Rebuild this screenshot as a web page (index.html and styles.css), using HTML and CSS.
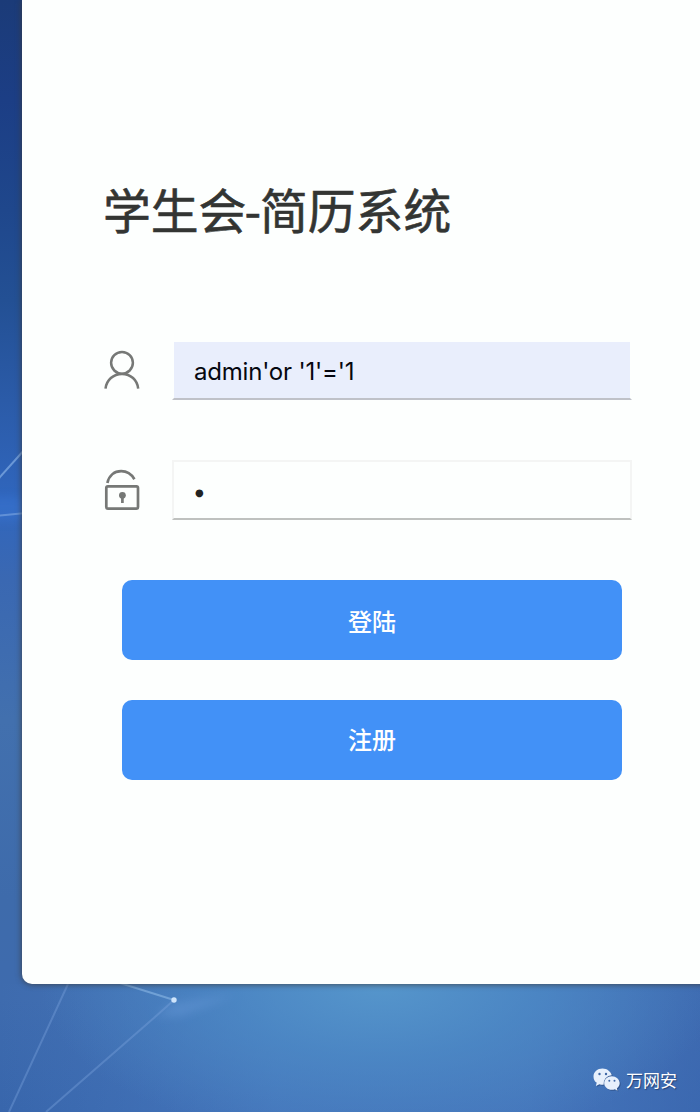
FILE: index.html
```html
<!DOCTYPE html>
<html lang="zh-CN">
<head>
    <meta charset="UTF-8">
    <meta name="viewport" content="width=device-width, initial-scale=1.0">
    <title>学生会-简历系统</title>
    <link rel="stylesheet" href="styles.css">
</head>
<body>
    <!-- background lines -->
    <svg class="bg-lines" viewBox="0 0 700 1112" fill="none">
        <defs>
            <filter id="soft" x="-50%" y="-50%" width="200%" height="200%"><feGaussianBlur stdDeviation="5"/></filter>
        </defs>
        <ellipse cx="4" cy="509" rx="34" ry="12" fill="#3a78d8" opacity=".4" filter="url(#soft)"/>
        <path d="M-10 488L26 448" stroke="#7fa9e2" stroke-width="2" opacity=".75"/>
        <path d="M-5 516L26 513" stroke="#7fa9e2" stroke-width="2" opacity=".6"/>
        <path d="M68 984L9 1112" stroke="#7ba3dc" stroke-width="2" opacity=".4"/>
        <path d="M120 983L174 1000" stroke="#8cb9e6" stroke-width="2" opacity=".6"/>
        <path d="M174 1000L155 1017L46 1112" stroke="#7ba3dc" stroke-width="2" opacity=".4"/>
        <path d="M174 1003L155 1017L182 1016L235 995Z" fill="#6fa0e0" opacity=".35" filter="url(#soft)"/>
        <circle cx="174" cy="1000" r="2.7" fill="#cfe4fb"/>
    </svg>
    <div class="login-box">
        <h1>学生会<span class="dash">-</span>简历系统</h1>
        <form id="loginForm">
            <div class="row">
                <svg class="icon" width="36" height="42" viewBox="0 0 36 42" fill="none" stroke="#767876" stroke-width="2.5">
                    <circle cx="18" cy="13.8" r="10.9"/>
                    <path d="M1.5 39.6C2.5 31 9.3 24.9 18 24.9S33.3 31 34.2 39.6"/>
                </svg>
                <input type="text" class="filled" value="admin'or '1'='1">
            </div>
            <div class="row">
                <svg class="icon" width="36" height="42" viewBox="0 0 36 42" fill="none" stroke="#767876" stroke-width="2.7">
                    <path d="M3.4 14C5 6.3 10.5 2.2 17.2 2.2C22.8 2.2 27.3 5 30.4 10.2"/>
                    <rect x="2.3" y="17.3" width="31.7" height="22.4" rx="1.6"/>
                    <circle cx="18.4" cy="26.3" r="3.4" fill="#767876" stroke="none"/>
                    <path d="M18.4 27V34"/>
                </svg>
                <input type="text" class="pwd" value="●">
            </div>
            <button type="button" class="btn">登陆</button>
            <button type="button" class="btn btn-reg">注册</button>
        </form>
    </div>
    <div class="footer">
        <svg width="27" height="24" viewBox="0 0 27 24">
            <path d="M9.5.5C4.5.5.5 3.9.5 8.5C.5 11.2 1.7 13.5 3.7 14.8L2.9 18L6.4 16.3Q8.5 17 10.6 16.8A8.3 8.3 0 0 1 18.8 7.3C17.7 3.3 14 .5 9.5.5Z" fill="#e7f0fc"/>
            <path d="M18.8 8.2C14.5 8.2 11.2 11.2 11.2 15S14.5 21.8 18.8 21.8Q20.5 21.8 21.9 21.3L24.5 22.8L23.9 20.2C25.6 19 26.7 17.2 26.7 15C26.7 11.2 23 8.2 18.8 8.2Z" fill="#e7f0fc"/>
            <g fill="#3f68a6">
                <circle cx="6.5" cy="6" r="1.2"/>
                <circle cx="13" cy="6" r="1.2"/>
                <circle cx="16.3" cy="12.8" r="1"/>
                <circle cx="21.5" cy="12.8" r="1"/>
            </g>
        </svg>
        <span>万网安</span>
    </div>
</body>
</html>
```

FILE: styles.css
```css
* {
    box-sizing: border-box;
}
body {
    margin: 0;
    height: 1112px;
    overflow: hidden;
    position: relative;
    font-family: "Noto Sans CJK SC", sans-serif;
    background:
        radial-gradient(ellipse 340px 160px at 380px 985px, rgba(88, 155, 206, 0.85) 0%, rgba(78, 142, 200, 0.65) 45%, rgba(70, 122, 190, 0) 100%),
        linear-gradient(90deg, rgba(62, 106, 174, 0), rgba(74, 124, 194, 0.7) 40%, rgba(74, 124, 194, 0.7) 75%, rgba(62, 106, 180, 0.5)) 0 984px / 100% 128px no-repeat,
        linear-gradient(180deg, #1b3b78 0, #1c3e85 100px, #1f478c 210px, #235094 300px, #2b5ba8 400px, #3066bd 500px, #3a68b2 580px, #4270ae 720px, #3e6bab 900px, #3e6bae 1000px, #3866ac 1112px);
}
.bg-lines {
    position: absolute;
    left: 0;
    top: 0;
    width: 700px;
    height: 1112px;
}
.login-box {
    position: relative;
    height: 984px;
    margin-left: 22px;
    margin-right: -20px;
    padding: 174px 88px 0 82px;
    background: #fdfffe;
    border-radius: 0 0 0 10px;
    box-shadow: 0 0 6px rgba(60, 60, 60, 0.9);
}
h1 {
    margin: 0 0 96px -1px;
    font-size: 47.8px;
    line-height: 70px;
    font-weight: 400;
    color: #333533;
    white-space: nowrap;
    -webkit-text-stroke: 0.6px #333533;
}
.dash {
    margin: 0 -1px 0 -2px;
}
.row {
    display: flex;
    align-items: center;
    gap: 32px;
    height: 60px;
    margin-bottom: 60px;
}
.icon {
    flex: none;
}
input {
    width: 460px;
    height: 60px;
    padding: 0 20px;
    border: 2px solid #f4f5f4;
    border-bottom-color: #bfc1bf;
    background: #fdfffe;
    font-family: Inter, "Noto Sans CJK SC", sans-serif;
    font-size: 24px;
    color: #222;
    outline: none;
}
input.filled {
    padding-top: 2px;
    border-color: #fdfffe;
    border-bottom-color: #bfc1c8;
    background: #e9eefc;
    background-clip: padding-box;
    color: #05070f;
    letter-spacing: -0.2px;
}
input.pwd {
    font-family: "DejaVu Sans", sans-serif;
    font-size: 10px;
    padding: 5px 21px 0;
}
.btn {
    display: block;
    width: 500px;
    height: 80px;
    margin: 0 0 40px 18px;
    padding: 0;
    border: none;
    border-radius: 10px;
    background: #4291f7;
    color: #fff;
    font-family: inherit;
    font-size: 24px;
    font-weight: 500;
    cursor: pointer;
}
.btn-reg {
    padding-bottom: 4px;
}
.footer {
    position: relative;
    display: flex;
    align-items: center;
    justify-content: flex-end;
    gap: 6px;
    height: 24px;
    margin: 84px 23px 0 0;
    color: #fff;
    font-size: 17px;
    line-height: 24px;
    text-shadow: 1px 1px 1px rgba(20, 40, 80, 0.6);
}
.footer svg {
    filter: drop-shadow(1px 1px 0 rgba(40, 70, 120, 0.6));
}
```
